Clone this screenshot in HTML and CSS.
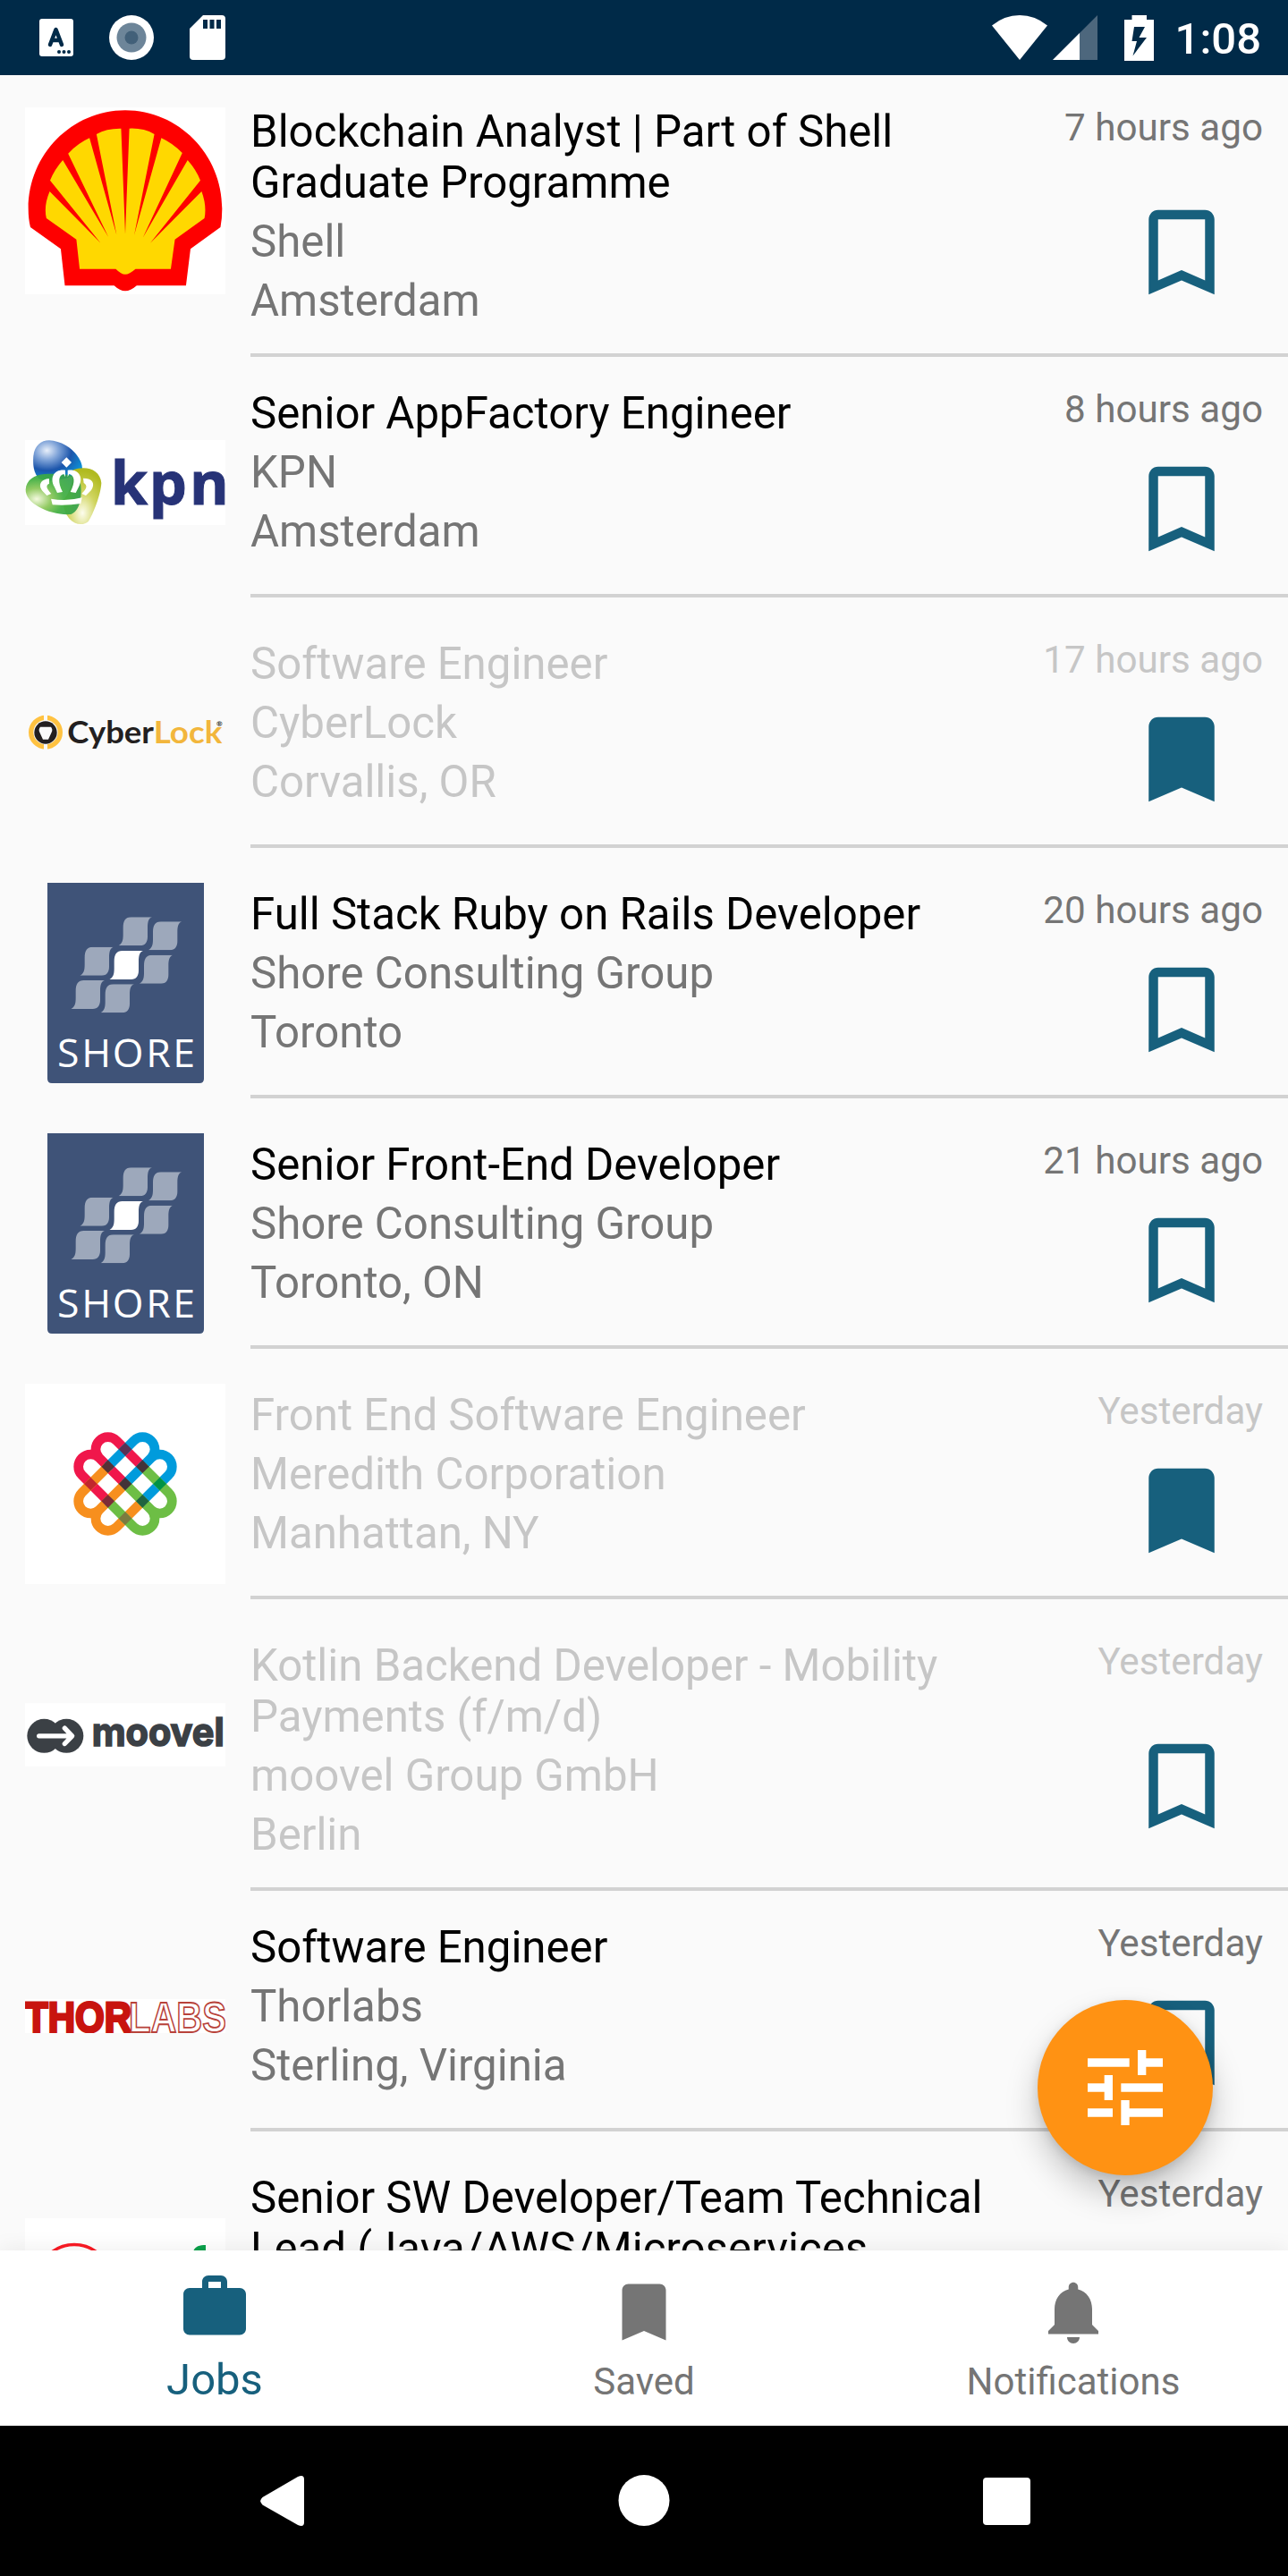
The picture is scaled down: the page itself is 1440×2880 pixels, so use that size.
FILE: index.html
```html
<!DOCTYPE html>
<html lang="en">
<head>
<meta charset="utf-8">
<title>Jobs</title>
<link rel="stylesheet" href="styles.css">
</head>
<body>
<svg class="defs" aria-hidden="true">
  <symbol id="bookmark-outline" viewBox="0 0 24 24"><path d="M17 3H7c-1.1 0-1.99.9-1.99 2L5 21l7-3 7 3V5c0-1.1-.9-2-2-2zm0 15l-5-2.18L7 18V5h10v13z"/></symbol>
  <symbol id="bookmark" viewBox="0 0 24 24"><path d="M17 3H7c-1.1 0-1.99.9-1.99 2L5 21l7-3 7 3V5c0-1.1-.9-2-2-2z"/></symbol>
  <symbol id="tile" viewBox="0 0 113 96"><path d="M43 0H113C103 3 98 12 98 36V66C98 84 90 96 73 96H0C12 90 16 80 16 60V36C16 12 24 0 43 0Z"/></symbol>
  <symbol id="shore" viewBox="99 81 525 672">
    <path fill="#3f5378" d="M99 81H624V738Q624 753 609 753H114Q99 753 99 738Z"/>
    <g fill="#9da8bb">
      <use href="#tile" x="337" y="196" width="113" height="96"/>
      <use href="#tile" x="437" y="211" width="113" height="96"/>
      <use href="#tile" x="208" y="296" width="113" height="96"/>
      <use href="#tile" x="407" y="323" width="113" height="96"/>
      <use href="#tile" x="178" y="408" width="113" height="96"/>
      <use href="#tile" x="277" y="421" width="113" height="96"/>
    </g>
    <use href="#tile" x="307" y="309" width="113" height="96" fill="#fff"/>
    <text class="shore-text" x="132 214 317 430 520" y="698">SHORE</text>
  </symbol>
</svg>

<header class="status">
  <div class="status-left">
    <svg width="38" height="42" viewBox="0 0 38 42"><rect width="38" height="42" rx="3" fill="#fff"/><path d="M12 29l6.500-17 6.500 17M14.500 24h8" fill="none" stroke="#002a48" stroke-width="4.500" stroke-linecap="round" stroke-linejoin="round"/><g fill="#002a48"><circle cx="22" cy="37" r="2"/><circle cx="27.500" cy="37" r="2"/><circle cx="33" cy="37" r="2"/></g></svg>
    <svg width="50" height="50" viewBox="0 0 50 50"><circle cx="25" cy="25" r="25" fill="#fff"/><circle cx="25" cy="25" r="16.500" fill="#6d8599"/><circle cx="25" cy="25" r="7.500" fill="#426079"/></svg>
    <svg width="40" height="50" viewBox="0 0 40 50"><path fill="#fff" fill-rule="evenodd" d="M15 0H36Q40 0 40 4V46Q40 50 36 50H4Q0 50 0 46V15ZM15 5V15H20V5ZM22.500 5V15H27.500V5ZM30 5V15H35V5Z"/></svg>
  </div>
  <div class="status-right">
    <svg class="wifi" width="62" height="50" viewBox="0 0 62 50"><path fill="#fff" d="M31 50L0 11.500Q14 0 31 0T62 11.500Z"/></svg>
    <svg class="signal" width="50" height="50" viewBox="0 0 50 50"><path fill="#4d677d" d="M50 0V50H0Z"/><path fill="#fff" d="M30 20V50H0Z"/></svg>
    <svg class="battery" width="33" height="51" viewBox="0 0 33 51"><path fill="#fff" d="M8.500 0H25V5H33V51H0V5H8.500Z"/><path fill="#002a48" d="M11 13H23L16.500 25H25L9.500 45.500L14 29H8.500Z"/></svg>
    <span class="clock">1:08</span>
  </div>
</header>

<main class="jobs">
  <article class="job tall">
    <div class="logo"><svg width="224" height="209" viewBox="61 360 488 627" preserveAspectRatio="none">
      <rect x="61" y="360" width="488" height="627" fill="#fff"/>
      <path fill="#fe0000" d="M305 370C435 370 541 518 541 700Q541 735 537 762L464 835L453 958H333Q318 976 305 976Q292 976 278 958H158L148 835L74 762Q69 735 69 700C69 518 175 370 305 370Z"/>
      <path fill="#ffd800" d="M194 902L186 803L113 732Q106 690 121 642L245 815L122 605Q133 568 153 537L264 795L166 515Q190 480 218 463L284 788L235 450Q260 430 295 431L305 785L315 431Q350 429 376 450L327 788L393 463Q420 480 444 513L348 797L457 537Q478 570 488 605L366 815L491 642Q504 690 498 732L426 803L416 902H330Q315 920 305 920Q295 920 282 902Z"/>
    </svg></div>
    <div class="info"><h2>Blockchain Analyst | Part of Shell Graduate Programme</h2><p>Shell</p><p>Amsterdam</p></div>
    <div class="side"><time>7 hours ago</time><svg class="mark"><use href="#bookmark-outline"/></svg></div>
  </article>

  <article class="job">
    <div class="logo"><svg width="224" height="95" viewBox="84 96 672 285">
      <defs>
        <radialGradient id="kpn-blue" cx=".28" cy=".25" r=".8"><stop offset="0" stop-color="#e8effa"/><stop offset=".3" stop-color="#7fa3d8"/><stop offset=".62" stop-color="#1c55ab"/><stop offset="1" stop-color="#0d8fd6"/></radialGradient>
        <radialGradient id="kpn-green" cx=".2" cy=".62" r=".75"><stop offset="0" stop-color="#f3f9dc"/><stop offset=".35" stop-color="#8ac656"/><stop offset=".65" stop-color="#3fae3f"/><stop offset="1" stop-color="#35a24a"/></radialGradient>
        <radialGradient id="kpn-lime" cx=".5" cy=".8" r=".75"><stop offset="0" stop-color="#fdfdee"/><stop offset=".5" stop-color="#d0d560"/><stop offset="1" stop-color="#b0ba20"/></radialGradient>
      </defs>
      <rect x="84" y="96" width="672" height="285" fill="#fff"/>
      <path fill="url(#kpn-blue)" d="M165 97C222 99 276 150 276 192C262 220 170 245 130 225C112 205 110 180 112 150C115 115 138 97 165 97Z"/>
      <path fill="url(#kpn-lime)" d="M245 196C290 180 336 195 340 240C338 280 312 345 297 368C280 385 250 380 233 360C212 335 205 300 225 280C242 250 245 225 245 196Z"/>
      <path fill="url(#kpn-green)" fill-opacity=".92" d="M150 210C200 207 250 212 266 225C276 255 278 330 238 345C170 350 84 310 86 262C88 230 115 212 150 210Z"/>
      <g fill="#fff" transform="translate(72 84)">
        <path d="M93 142C67 142 54 162 70 182L85 198L100 192C84 174 80 164 93 158Z"/>
        <path d="M147 113C112 108 93 136 110 168L120 189L138 186C121 152 124 130 142 126L147 136Z"/>
        <path d="M155 113C192 108 208 136 194 165L182 189L164 186C182 152 178 130 160 126L155 136Z"/>
        <path d="M207 140C240 140 248 158 234 180L216 198L202 192C220 174 222 164 209 156Z"/>
        <path d="M151 70L168 87L151 104L134 87ZM99 209Q151 219 203 205L199 225Q151 233 104 229Z"/>
      </g>
      <text class="kpn-text" x="371 500 636" y="311">kpn</text>
    </svg></div>
    <div class="info"><h2>Senior AppFactory Engineer</h2><p>KPN</p><p>Amsterdam</p></div>
    <div class="side"><time>8 hours ago</time><svg class="mark"><use href="#bookmark-outline"/></svg></div>
  </article>

  <article class="job spaced seen">
    <div class="logo"><svg width="224" height="50" viewBox="84 1000 672 150">
      <circle cx="153" cy="1074" r="49" fill="none" stroke="#ffc241" stroke-width="16"/>
      <path stroke="#fafafa" stroke-width="12" d="M153 1012V1042M153 1106V1136"/>
      <circle cx="153" cy="1075" r="38" fill="#231f20"/>
      <path fill="#fafafa" d="M135 1056H171Q178 1065 173 1074L162 1098H144L133 1074Q128 1065 135 1056Z"/>
      <text class="cyber" x="226" y="1111" textLength="290" lengthAdjust="spacingAndGlyphs" fill="#231f20">Cyber</text>
      <text class="cyber" x="515" y="1111" textLength="230" lengthAdjust="spacingAndGlyphs" fill="#f2b63c">Lock</text>
      <text class="cyber-reg" x="726" y="1054" fill="#231f20">®</text>
    </svg></div>
    <div class="info"><h2>Software Engineer</h2><p>CyberLock</p><p>Corvallis, OR</p></div>
    <div class="side"><time>17 hours ago</time><svg class="mark"><use href="#bookmark"/></svg></div>
  </article>

  <article class="job spaced">
    <div class="logo"><svg width="175" height="224"><use href="#shore"/></svg></div>
    <div class="info"><h2>Full Stack Ruby on Rails Developer</h2><p>Shore Consulting Group</p><p>Toronto</p></div>
    <div class="side"><time>20 hours ago</time><svg class="mark"><use href="#bookmark-outline"/></svg></div>
  </article>

  <article class="job spaced">
    <div class="logo"><svg width="175" height="224"><use href="#shore"/></svg></div>
    <div class="info"><h2>Senior Front-End Developer</h2><p>Shore Consulting Group</p><p>Toronto, ON</p></div>
    <div class="side"><time>21 hours ago</time><svg class="mark"><use href="#bookmark-outline"/></svg></div>
  </article>

  <article class="job spaced seen">
    <div class="logo"><svg width="224" height="224" viewBox="24 81 672 672">
      <rect x="24" y="81" width="672" height="672" fill="#fff"/>
      <g fill="none" stroke-width="32">
        <path stroke="#f0174b" d="M418 359L331 272A41 41 0 0 0 273 330L360 417M273 330A41 41 0 0 0 215 388L302 475"/>
        <path stroke="#009bdc" d="M302 359L389 272A41 41 0 0 1 447 330L360 417M447 330A41 41 0 0 1 505 388L418 475"/>
        <path stroke="#f78f1e" d="M302 359L215 446A41 41 0 0 0 273 504L360 417M273 504A41 41 0 0 0 331 562L418 475"/>
        <path stroke="#6dbe45" d="M418 359L505 446A41 41 0 0 1 447 504L360 417M447 504A41 41 0 0 1 389 562L302 475"/>
      </g>
      <path fill="#583155" d="M360 279l22 22-22 22-22-22z"/>
      <path fill="#553136" d="M302 337l22 22-22 22-22-22z"/>
      <path fill="#433338" d="M418 337l22 22-22 22-22-22zM360 395l22 22-22 22-22-22z"/>
      <path fill="#c1272d" d="M244 395l22 22-22 22-22-22z"/>
      <path fill="#009245" d="M476 395l22 22-22 22-22-22z"/>
      <path fill="#7d2c37" d="M302 453l22 22-22 22-22-22z"/>
      <path fill="#1f6340" d="M418 453l22 22-22 22-22-22z"/>
      <path fill="#7b7b40" d="M360 511l22 22-22 22-22-22z"/>
    </svg></div>
    <div class="info"><h2>Front End Software Engineer</h2><p>Meredith Corporation</p><p>Manhattan, NY</p></div>
    <div class="side"><time>Yesterday</time><svg class="mark"><use href="#bookmark"/></svg></div>
  </article>

  <article class="job spaced seen tall">
    <div class="logo"><svg width="224" height="71" viewBox="24 1152 672 212">
      <rect x="24" y="1152" width="672" height="212" fill="#fff"/>
      <g fill="#3b4045"><circle cx="88" cy="1262" r="57"/><circle cx="163" cy="1262" r="57"/></g>
      <path fill="none" stroke="#fff" stroke-width="16" stroke-linecap="round" stroke-linejoin="round" d="M71 1262H180M157 1236L182 1262L157 1288"/>
      <text class="moovel" x="248" y="1297" textLength="444" lengthAdjust="spacingAndGlyphs">moovel</text>
    </svg></div>
    <div class="info"><h2>Kotlin Backend Developer - Mobility Payments (f/m/d)</h2><p>moovel Group GmbH</p><p>Berlin</p></div>
    <div class="side"><time>Yesterday</time><svg class="mark"><use href="#bookmark-outline"/></svg></div>
  </article>

  <article class="job">
    <div class="logo"><svg width="224" height="38" viewBox="0 0 224 38">
      <rect width="224" height="38" fill="#fff"/>
      <text class="thor" x="0" y="36.500" textLength="119" lengthAdjust="spacingAndGlyphs">THOR</text>
      <text class="labs" x="116" y="36.500" textLength="109" lengthAdjust="spacingAndGlyphs">LABS</text>
    </svg></div>
    <div class="info"><h2>Software Engineer</h2><p>Thorlabs</p><p>Sterling, Virginia</p></div>
    <div class="side"><time>Yesterday</time><svg class="mark"><use href="#bookmark-outline"/></svg></div>
  </article>

  <article class="job spaced">
    <div class="logo"><svg width="224" height="108" viewBox="0 0 224 108">
      <rect width="224" height="108" fill="#fff"/>
      <circle cx="55" cy="71" r="41.500" fill="none" stroke="#fb1a24" stroke-width="3.500"/>
      <path fill="#0aa14b" d="M188 38C189 32 194 30 202 30V60H188Z"/>
    </svg></div>
    <div class="info"><h2>Senior SW Developer/Team Technical Lead (Java/AWS/Microservices</h2></div>
    <div class="side"><time>Yesterday</time></div>
  </article>

  <button class="fab" aria-label="Filter"><svg width="112" height="112" viewBox="0 0 24 24"><path fill="#fff" d="M3 17v2h6v-2H3zM3 5v2h10V5H3zm10 16v-2h8v-2h-8v-2h-2v6h2zM7 9v2H3v2h4v2h2V9H7zm14 4v-2H11v2h10zm-6-4h2V7h4V5h-4V3h-2v6z"/></svg></button>
</main>

<nav class="tabs">
  <div class="tab active">
    <svg viewBox="0 0 24 24"><path d="M20 6h-4V4c0-1.110-.89-2-2-2h-4c-1.110 0-2 .89-2 2v2H4c-1.110 0-1.990.89-1.990 2L2 19c0 1.110.89 2 2 2h16c1.110 0 2-.89 2-2V8c0-1.110-.89-2-2-2zm-6 0h-4V4h4v2z"/></svg>
    <span>Jobs</span>
  </div>
  <div class="tab">
    <svg><use href="#bookmark"/></svg>
    <span>Saved</span>
  </div>
  <div class="tab">
    <svg viewBox="0 0 24 24"><path d="M12 22c1.100 0 2-.9 2-2h-4c0 1.100.89 2 2 2zm6-6v-5c0-3.070-1.640-5.640-4.500-6.320V4c0-.83-.67-1.500-1.500-1.500s-1.500.67-1.500 1.500v.68C7.630 5.360 6 7.920 6 11v5l-2 2v1h16v-1l-2-2z"/></svg>
    <span>Notifications</span>
  </div>
</nav>

<footer class="system">
  <svg width="49" height="58" viewBox="0 0 49 58"><path fill="#fff" d="M2.500 25L42 2Q49-1 49 5V53Q49 59 42 56L2.500 33.500Q-2 29 2.500 25Z"/></svg>
  <svg width="58" height="58" viewBox="0 0 58 58"><circle cx="29" cy="28.500" r="28.500" fill="#fff"/></svg>
  <svg width="53" height="58" viewBox="0 0 53 58"><rect y="3" width="53" height="53" rx="4" fill="#fff"/></svg>
</footer>
</body>
</html>
```
FILE: styles.css
```css
* { box-sizing: border-box; }

body {
  margin: 0;
  width: 1440px;
  height: 2880px;
  display: flex;
  flex-direction: column;
  overflow: hidden;
  background: #fafafa;
  font-family: Roboto, sans-serif;
}

svg { display: block; flex: none; }
.defs { position: absolute; width: 0; height: 0; }

/* status bar */
.status {
  flex: none;
  height: 84px;
  display: flex;
  align-items: center;
  justify-content: space-between;
  padding: 0 30px 0 44px;
  background: #002a48;
}
.status-left { display: flex; align-items: center; gap: 40px; }
.status-right { display: flex; align-items: center; }
.signal { margin-left: 6px; }
.battery { margin-left: 30px; }
.clock {
  margin-left: 24px;
  margin-top: 3px;
  color: #fff;
  font-size: 49px;
  font-weight: 500;
  line-height: 57px;
}

/* job list */
.jobs {
  position: relative;
  flex: none;
  height: 2432px;
  overflow: hidden;
}
.job {
  display: flex;
}
.job.spaced { padding-top: 11px; }
.logo {
  flex: none;
  width: 280px;
  height: 265px;
  padding: 28px 28px 13px;
  display: flex;
  align-items: center;
  justify-content: center;
}
.info {
  flex: 1;
  min-height: 269px;
  padding: 35px 0 30px;
  border-bottom: 4px solid #d2d2d2;
}
.info h2,
.info p {
  margin: 0;
  font-size: 49.2px;
  font-weight: 400;
  line-height: 57px;
}
.info h2 { max-width: 850px; color: #000; }
.info p { margin-top: 9px; color: #757575; }
.side {
  flex: none;
  width: 300px;
  padding: 34px 28px 8px 0;
  border-bottom: 4px solid #d2d2d2;
  display: flex;
  flex-direction: column;
  align-items: flex-end;
}
.side time {
  font-size: 42.2px;
  line-height: 49px;
  color: #757575;
}
.tall .side time { margin-bottom: 10px; }
.mark {
  width: 126px;
  height: 126px;
  margin: auto 28px auto 0;
  fill: #17607d;
}
.seen .info h2,
.seen .info p,
.seen .side time { color: #c6c6c6; }

/* wordmarks inside the company logos */
.shore-text { font: 400 134px "Open Sans", sans-serif; fill: #fff; }
.kpn-text { font: 700 200px "Open Sans", sans-serif; fill: #273377; stroke: #273377; stroke-width: 3px; }
.cyber { font: 700 104px Lato, sans-serif; }
.cyber-reg { font: 700 24px Lato, sans-serif; }
.moovel { font: 700 130px Inter, sans-serif; fill: #3b4045; stroke: #3b4045; stroke-width: 5px; }
.thor { font: 700 49px "Liberation Sans", sans-serif; fill: #c8140f; stroke: #c8140f; stroke-width: 3px; }
.labs { font: 700 49px "Liberation Sans", sans-serif; fill: #fff; stroke: #b8423a; stroke-width: 1.8px; }

/* floating filter button */
.fab {
  position: absolute;
  right: 84px;
  bottom: 84px;
  width: 196px;
  height: 196px;
  padding: 0;
  border: 0;
  border-radius: 50%;
  display: flex;
  align-items: center;
  justify-content: center;
  background: #ff9213;
  box-shadow: 0 20px 36px rgba(0, 0, 0, .22), 0 4px 12px rgba(0, 0, 0, .12);
}

/* bottom navigation */
.tabs {
  position: relative;
  flex: none;
  height: 196px;
  display: flex;
  background: #fff;
  box-shadow: 0 0 24px rgba(0, 0, 0, .08);
}
.tab {
  flex: 1;
  padding-top: 27px;
  display: flex;
  flex-direction: column;
  align-items: center;
  color: #757575;
  font-size: 42px;
  line-height: 49px;
}
.tab svg { width: 84px; height: 84px; fill: currentColor; }
.tab span { margin-top: 11px; }
.tab.active {
  padding-top: 21px;
  color: #17607d;
  font-size: 49px;
  line-height: 57px;
}
.tab.active span { margin-top: 11px; }

/* system navigation */
.system {
  position: relative;
  flex: none;
  height: 168px;
  padding: 0 288px 0 291px;
  display: flex;
  align-items: center;
  justify-content: space-between;
  background: #000;
}
```
